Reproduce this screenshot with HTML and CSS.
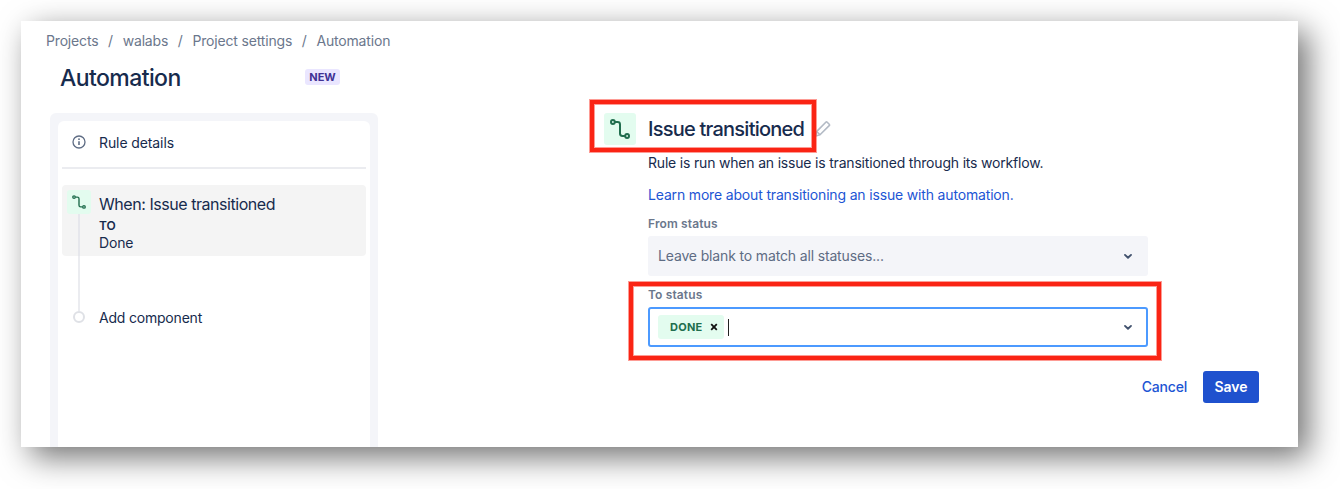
FILE: index.html
```html
<!DOCTYPE html>
<html lang="en">
<head>
<meta charset="utf-8">
<title>Automation</title>
<link rel="stylesheet" href="styles.css">
</head>
<body>
<div class="window">
  <nav class="breadcrumbs">
    <span>Projects</span><span class="sep">/</span><span>walabs</span><span class="sep">/</span><span>Project settings</span><span class="sep">/</span><span>Automation</span>
  </nav>
  <div class="columns">
    <aside class="sidebar">
      <header class="heading"><h1>Automation</h1><span class="lozenge">NEW</span></header>
      <div class="panel">
        <div class="panel-inner">
          <div class="details">
            <svg class="info" width="14" height="14" viewBox="0 0 14 14" fill="none" stroke="#5e6c84"><circle cx="7" cy="7" r="6" stroke-width="1.3"/><path d="M7 6.2V10" stroke-width="1.6"/><circle cx="7" cy="4.2" r=".9" fill="#5e6c84" stroke="none"/></svg>
            <span class="label">Rule details</span>
          </div>
          <div class="step">
            <div class="rail">
              <span class="tile small"><svg width="14" height="14" viewBox="0 0 20 20" fill="none" stroke="#216e4e" stroke-width="2"><circle cx="2.9" cy="3" r="1.8"/><circle cx="17.1" cy="17" r="1.8"/><path d="M5 3h2.6Q10 3 10 5.4v9.2Q10 17 12.4 17H15"/></svg></span>
              <span class="line"></span>
            </div>
            <div class="step-text"><div class="step-title">When: Issue transitioned</div><div class="step-key">TO</div><div class="step-value">Done</div></div>
          </div>
          <div class="gap-line"></div>
          <div class="add"><span class="dot"></span><span class="add-label">Add component</span></div>
        </div>
      </div>
    </aside>
    <main class="editor">
      <div class="title-row">
        <span class="tile large"><svg width="20" height="20" viewBox="0 0 20 20" fill="none" stroke="#216e4e" stroke-width="2"><circle cx="2.9" cy="3" r="1.9"/><circle cx="17.1" cy="17" r="1.9"/><path d="M5 3h2.6Q10 3 10 5.4v9.2Q10 17 12.4 17H15"/></svg></span>
        <h2>Issue transitioned</h2>
        <svg class="pencil" width="16" height="18" viewBox="0 0 16 18" fill="none" stroke="#b3bac5" stroke-width="1.6" stroke-linejoin="round"><path d="M10.8 2.2Q11.5 1.5 12.2 2.2L14.2 4.2Q14.9 4.9 14.2 5.6L5 14.8L.6 16L1.8 11.4Z"/><path d="M1.8 11.6L5 14.8"/></svg>
      </div>
      <div class="form">
        <p class="desc">Rule is run when an issue is transitioned through its workflow.</p>
        <a class="learn">Learn more about transitioning an issue with automation.</a>
        <label class="field-label from">From status</label>
        <div class="select"><span class="placeholder">Leave blank to match all statuses...</span>
          <svg class="chevron" width="10" height="8" viewBox="0 0 10 8" fill="none" stroke="#42526e" stroke-width="1.9" stroke-linecap="round" stroke-linejoin="round"><path d="M2 2.9L5 5.8L8 2.9"/></svg></div>
        <label class="field-label to">To status</label>
        <div class="select focused"><span class="tag"><span class="tag-name">DONE</span><svg width="8" height="8" viewBox="0 0 8 8" stroke="#111" stroke-width="1.8"><path d="M1.2 1.2L6.8 6.8M6.8 1.2L1.2 6.8"/></svg></span><span class="caret"></span>
          <svg class="chevron" width="10" height="8" viewBox="0 0 10 8" fill="none" stroke="#42526e" stroke-width="1.9" stroke-linecap="round" stroke-linejoin="round"><path d="M2 2.9L5 5.8L8 2.9"/></svg></div>
      </div>
      <div class="actions"><span class="cancel">Cancel</span><span class="save">Save</span></div>
    </main>
  </div>
</div>
<div class="mark mark-title"></div>
<div class="mark mark-status"></div>
</body>
</html>
```
FILE: styles.css
```css
* { box-sizing: border-box; }
body { margin: 0; padding: 21px; width: 1340px; height: 489px; overflow: hidden; position: relative; background: #fff; font-family: Inter, "Liberation Sans", sans-serif; font-size: 14px; line-height: 20px; color: #172b4d; }
svg { display: block; flex: none; }
h1, h2, p { margin: 0; font-weight: 500; }
span, h1, h2, p, a, label { white-space: nowrap; }
.window { width: 1277px; height: 426px; overflow: hidden; background: #fff; box-shadow: 10px 10px 30px rgba(0, 0, 0, .56); }
.breadcrumbs { display: flex; height: 40px; padding: 10px 0 0 25px; gap: 9.7px; color: #6b778c; letter-spacing: -.17px; }
.columns { display: flex; }
.sidebar { width: 328px; margin-left: 29px; flex: none; }
.heading { display: flex; align-items: center; height: 32px; padding-left: 10px; }
.heading h1 { width: 245px; padding-top: 2px; font-size: 23px; line-height: 28px; letter-spacing: -.58px; }
.lozenge { display: block; width: 35px; height: 16px; border-radius: 3px; background: #eae6ff; color: #403294; font-size: 11px; font-weight: 700; line-height: 16px; text-align: center; }
.panel { margin-top: 20px; height: 360px; padding: 8px; background: #f4f5f9; border-radius: 6px; }
.panel-inner { height: 352px; padding: 0 4px; background: #fff; border-radius: 6px; }
.details { display: flex; height: 48px; padding: 12px 0 0 10px; border-bottom: 2px solid #ebecf0; gap: 13px; letter-spacing: -.1px; }
.info { margin-top: 2px; }
.step { display: flex; height: 71px; margin-top: 16px; background: #f4f4f4; border-radius: 4px; }
.rail { display: flex; flex-direction: column; align-items: center; width: 24px; margin-left: 5px; padding-top: 5px; }
.tile { display: flex; align-items: center; justify-content: center; flex: none; background: #e3fcef; border-radius: 3px; }
.small { width: 24px; height: 24px; }
.large { width: 32px; height: 32px; }
.line { width: 2px; flex: 1; background: #e6e7ec; }
.step-text { padding: 7px 0 0 8px; }
.step-title { height: 25px; font-size: 16px; line-height: 24px; letter-spacing: -.45px; }
.step-key { font-size: 12px; font-weight: 600; line-height: 17px; }
.step-value { line-height: 18px; letter-spacing: -.15px; }
.gap-line { width: 2px; height: 55px; margin-left: 16px; background: #ebecf0; }
.add { display: flex; align-items: flex-start; height: 20px; padding-left: 11px; gap: 14px; }
.dot { width: 12px; height: 12px; border: 2px solid #dfe1e6; border-radius: 50%; }
.add-label { margin-top: -3px; letter-spacing: -.2px; }
.editor { display: flex; flex-direction: column; flex: 1; padding: 52px 39px 0 226px; }
.title-row { display: flex; align-items: center; height: 32px; }
.title-row h2 { width: 156px; margin: 0 11px 0 12px; font-size: 20px; line-height: 28px; letter-spacing: -.76px; }
.form { display: flex; flex-direction: column; width: 500px; margin-left: 44px; }
.desc { margin-top: 8px; font-weight: 400; letter-spacing: -.19px; }
.learn { margin-top: 12px; color: #1d55d4; letter-spacing: -.165px; }
.field-label { color: #6b778c; font-size: 12px; font-weight: 600; line-height: 16px; letter-spacing: .12px; }
.from { margin-top: 11px; }
.to { margin-top: 11px; }
.select { display: flex; align-items: center; height: 40px; margin-top: 4px; padding: 0 15px 0 10px; border-radius: 3px; background: #f4f5f9; color: #5e6c84; }
.placeholder { letter-spacing: -.15px; }
.focused { padding: 0 13px 0 8px; border: 2px solid #4c9aff; background: #fff; }
.chevron { margin-left: auto; }
.tag { display: flex; align-items: center; width: 66px; height: 24px; padding-left: 12px; gap: 7px; border-radius: 3px; background: #e3fcef; color: #216e4e; }
.tag-name { width: 33px; font-size: 11px; font-weight: 700; letter-spacing: .25px; }
.caret { width: 1px; height: 17px; margin-left: 4px; background: #222; }
.actions { display: flex; justify-content: flex-end; align-items: center; height: 32px; margin-top: 24px; gap: 16px; font-weight: 500; }
.cancel { color: #1d55d4; letter-spacing: -.2px; }
.save { width: 56px; height: 32px; border-radius: 3px; background: #1f51ce; color: #fff; font-weight: 600; line-height: 32px; text-align: center; }
.mark { position: absolute; border: 4px solid #fa2414; box-shadow: 0 0 0 1px rgba(250, 36, 20, .45), inset 0 0 0 1px rgba(250, 36, 20, .45); }
.mark-title { left: 590px; top: 100px; width: 226px; height: 52px; }
.mark-status { left: 629px; top: 282px; width: 532px; height: 78px; }
```
